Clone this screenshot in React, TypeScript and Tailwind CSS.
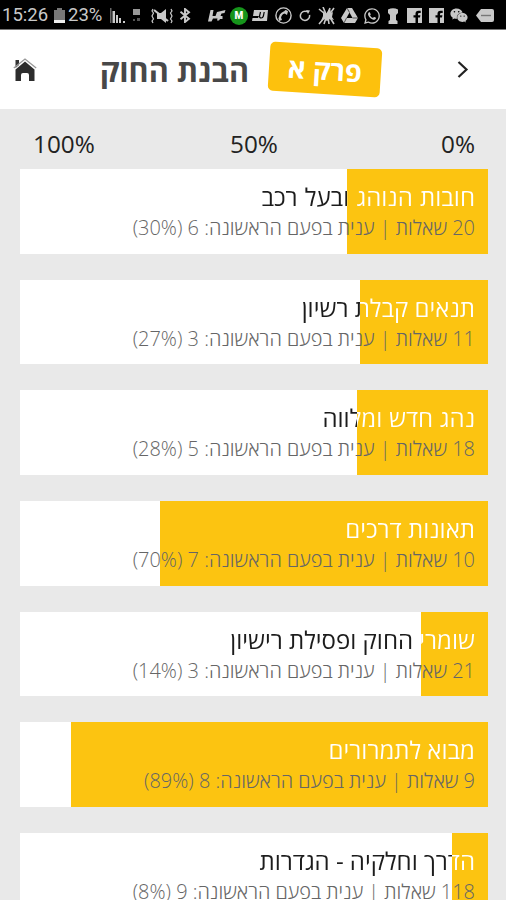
import type { ReactNode } from "react";
import { FaWeixin, FaWhatsapp } from "react-icons/fa";

type Topic = {
  title: string;
  questions: number;
  correct: number;
  percent: number;
  fill: number;
  spacing?: string;
};

const topics: Topic[] = [
  { title: "חובות הנוהג ובעל רכב", questions: 20, correct: 6, percent: 30, fill: 141, spacing: "[word-spacing:1px]" },
  { title: "תנאים קבלת רשיון", questions: 11, correct: 3, percent: 27, fill: 128 },
  { title: "נהג חדש ומלווה", questions: 18, correct: 5, percent: 28, fill: 131, spacing: "[word-spacing:0.5px]" },
  { title: "תאונות דרכים", questions: 10, correct: 7, percent: 70, fill: 328 },
  { title: "שומרי החוק ופסילת רישיון", questions: 21, correct: 3, percent: 14, fill: 67 },
  { title: "מבוא לתמרורים", questions: 9, correct: 8, percent: 89, fill: 417 },
  { title: "הדרך וחלקיה - הגדרות", questions: 118, correct: 9, percent: 8, fill: 36 },
];

function Icon({ className, box, children }: { className: string; box: string; children: ReactNode }) {
  return (
    <svg className={`shrink-0 ${className}`} viewBox={box} fill="currentColor">
      {children}
    </svg>
  );
}

function FacebookTile({ className }: { className: string }) {
  return (
    <Icon className={className} box="0 0 15 15">
      <path d="M0 0h15v15h-4V9.500h2l.4-2.200H11V6q0-1 1.200-1h1.500V2.800h-2.200Q8.500 2.800 8.500 5.700v1.600H6.500v2.200h2V15H0z" />
    </Icon>
  );
}

function StatusBar() {
  return (
    <div
      dir="ltr"
      className="flex h-[30px] shrink-0 items-center overflow-hidden border-b border-[#777] bg-black pl-[2px] pt-[2px] font-[Roboto,sans-serif] text-[#c9c9c9]"
    >
      <span className="w-[52px] shrink-0 text-[18.500px] leading-none">15:26</span>
      <Icon className="h-[15px] w-[11px]" box="0 0 11 15">
        <path fill="#777" d="M3 0h5v2h3v10H0V2h3z" />
        <path fill="#eee" d="M0 12h11v3H0z" />
      </Icon>
      <span className="ml-[3px] w-[39px] shrink-0 text-[18.500px] leading-none">23%</span>
      <Icon className="ml-[3px] h-[15px] w-[15px]" box="0 0 15 15">
        <path fill="#666" d="M0 0h1.500v15H0z" />
        <path d="M2.500 3h2.500v12H2.500zM6 7h2v8H6zM9 10h2v5H9zM13 13h2v2h-2z" />
      </Icon>
      <Icon className="ml-[7px] h-[15px] w-[8px]" box="0 0 8 15">
        <path fill="#999" d="M1 1h7v6H1z" />
        <path fill="#555" d="M1 11h2v2H1zM5 10h3v3H5z" />
      </Icon>
      <Icon className="ml-[11px] h-[16px] w-[22px]" box="0 0 22 16">
        <path d="M6 5h4l5-4v14l-5-4H6z" />
        <path fill="none" stroke="currentColor" strokeWidth="1.200" d="m2 1-1 2 1.500 2L1 8l1.500 3L1 13l1 2M20 1l1 2-1.500 2L21 8l-1.500 3 1.500 2-1 2" />
        <path fill="none" stroke="currentColor" strokeWidth="2.200" d="m3 2 14 11" />
      </Icon>
      <Icon className="ml-[6px] h-[15px] w-[12px]" box="0 0 12 15">
        <path fill="none" stroke="currentColor" strokeWidth="1.900" d="m1.500 3.800 8.500 7-4 3.200V1l4 3.200-8.500 7" />
      </Icon>
      <Icon className="ml-[17px] h-[14px] w-[18px]" box="0 0 18 14">
        <path d="M2.500 1h3L4.500 7h3l1.500-4 8.500-2-1 3-3 .5-1 2.500h2v3h-2.500l-1 1.500h-2l.5-2H5l-1.500 3H0z" />
      </Icon>
      <div className="ml-[4px] flex h-[18px] w-[18px] shrink-0 items-center justify-center rounded-full bg-[#16951b] text-[10px] font-black text-white">
        M
      </div>
      <Icon className="ml-[4px] h-[13px] w-[17px]" box="0 0 17 13">
        <path d="M2 1h14l-1 11H0l.5-3H6l1-2H1z" />
        <path fill="none" stroke="#000" strokeWidth="1.200" d="m8.500 3-1 4q0 2 1.700 2t2.200-2l.8-4" />
      </Icon>
      <Icon className="ml-[6px] h-[17px] w-[17px]" box="0 0 17 17">
        <circle cx="8.500" cy="8.500" r="7.600" fill="none" stroke="currentColor" strokeWidth="1.400" />
        <path fill="none" stroke="currentColor" strokeWidth="2.200" d="M4.800 12Q5 7 9 5.500l3-1" />
        <path d="m10 3 3 1-1 4-3-2zM3.500 10.500H6l1 2.500-3 1z" />
      </Icon>
      <Icon className="ml-[7px] h-[12px] w-[12px]" box="0 0 12 12">
        <path fill="none" stroke="currentColor" strokeWidth="1.500" d="M8 1.700A4.600 4.600 0 1 0 10.500 5" />
        <path d="m7 0 4 .5L9 4z" />
      </Icon>
      <Icon className="ml-[7px] h-[18px] w-[18px]" box="0 0 18 18">
        <path fill="none" stroke="currentColor" strokeWidth="1.600" d="m1 2 6 5M5 0l3 7M12 1 9 8M16 1l-5 7M7 10l-6 7M8 11l-2 6M10 10l1 7M11 9l5 8" />
        <path d="m5 4 3 3 4-6 1 5 2-1-1 5 2 3-4-1-3 2-3-2-3 2 2-5z" />
      </Icon>
      <Icon className="ml-[5px] h-[15px] w-[17px]" box="0 0 17 15">
        <path d="M6 0h5l6 10-3 5H3l-3-5z" />
        <path fill="none" stroke="#000" strokeWidth=".6" d="M6 0l2.500 4.500M17 10h-5.500M3 15l2.500-5" />
        <path fill="#000" d="m8.500 4.500 3 5.500h-6z" />
      </Icon>
      <FaWhatsapp className="ml-[5px] h-[18px] w-[18px] shrink-0" />
      <Icon className="ml-[7px] h-[16px] w-[10px]" box="0 0 10 16">
        <path d="M0 1.500Q5-1 10 1.500V5L8 7v5l1.500 1v3H.5v-3L2 12V7L0 5z" />
      </Icon>
      <FacebookTile className="ml-[9px] h-[15px] w-[15px]" />
      <FacebookTile className="ml-[7px] h-[15px] w-[15px]" />
      <FaWeixin className="ml-[6px] h-[17px] w-[18px] shrink-0" />
      <Icon className="ml-[8px] h-[13px] w-[18px]" box="0 0 18 13">
        <path d="M5 0h11q2 0 2 2v9q0 2-2 2H5L0 6.500z" />
        <path fill="#777" d="M5 5.800h10v1.400H5z" />
      </Icon>
    </div>
  );
}

function Header() {
  return (
    <header className="flex h-[79px] shrink-0 items-center bg-white">
      <svg className="mr-[37px] h-[20px] w-[12px] shrink-0" viewBox="0 0 12 20" fill="none" stroke="#222" strokeWidth="2.200">
        <path d="m1.500 2 8 7.500-8 7.500" />
      </svg>
      <div className="mr-[76px] flex h-[49px] w-[112px] shrink-0 rotate-[3.600deg] items-center justify-center rounded-[5px] bg-[#fdc10d] pt-[1px] text-[27.500px] font-bold text-white">
        <span className="whitespace-nowrap">פרק א</span>
      </div>
      <h1 className="mr-[20px] w-[150px] shrink-0 whitespace-nowrap text-[30.600px] font-bold leading-[40px] text-[#484848]">
        הבנת החוק
      </h1>
      <svg className="mr-auto ml-[13px] h-[24px] w-[24px] shrink-0" viewBox="0 0 24 24">
        <path fill="#333" d="M2.500 2H6v5l-3.500 3z" />
        <path fill="none" stroke="#999" strokeWidth="1.300" d="M.8 10 12 1l11.200 9" />
        <path fill="#2d2d2d" d="m12 3.500 9.500 8V23H16v-6q0-2-2-2h-4q-2 0-2 2v6H2.500V11.500z" />
      </svg>
    </header>
  );
}

function TopicCard({ topic }: { topic: Topic }) {
  const edge = topic.fill - 13;
  return (
    <li className="h-[84.700px] shrink-0 bg-white">
      <div
        className="h-full px-[13px] pt-[10px]"
        style={{ backgroundImage: `linear-gradient(to left, #fcc411 ${topic.fill}px, transparent ${topic.fill}px)` }}
      >
        <h2
          className={`whitespace-nowrap bg-clip-text text-[24px] leading-[36px] text-transparent ${topic.spacing ?? ""}`}
          style={{ backgroundImage: `linear-gradient(to left, #ffffff ${edge}px, #1c1c1c ${edge}px)` }}
        >
          {topic.title}
        </h2>
        <p className="whitespace-nowrap text-[19.950px] font-light leading-[26px] text-[#666]">
          {`${topic.questions} שאלות | ענית בפעם הראשונה: ${topic.correct} (${topic.percent}%)`}
        </p>
      </div>
    </li>
  );
}

export default function App() {
  return (
    <div
      dir="rtl"
      className="flex h-[900px] w-[506px] flex-col overflow-hidden bg-[#e9e9e9] font-['Open_Sans','Noto_Sans',sans-serif]"
    >
      <StatusBar />
      <Header />
      <div className="grid h-[60px] shrink-0 grid-cols-3 pr-[31px] pl-[33px] pt-[17px] text-[24.300px] leading-[36px] text-[#222]">
        <span>0%</span>
        <span className="text-center">50%</span>
        <span className="text-left">100%</span>
      </div>
      <ul className="mr-[18px] ml-[20px] flex flex-col gap-[26px]">
        {topics.map((topic) => (
          <TopicCard key={topic.title} topic={topic} />
        ))}
      </ul>
    </div>
  );
}
